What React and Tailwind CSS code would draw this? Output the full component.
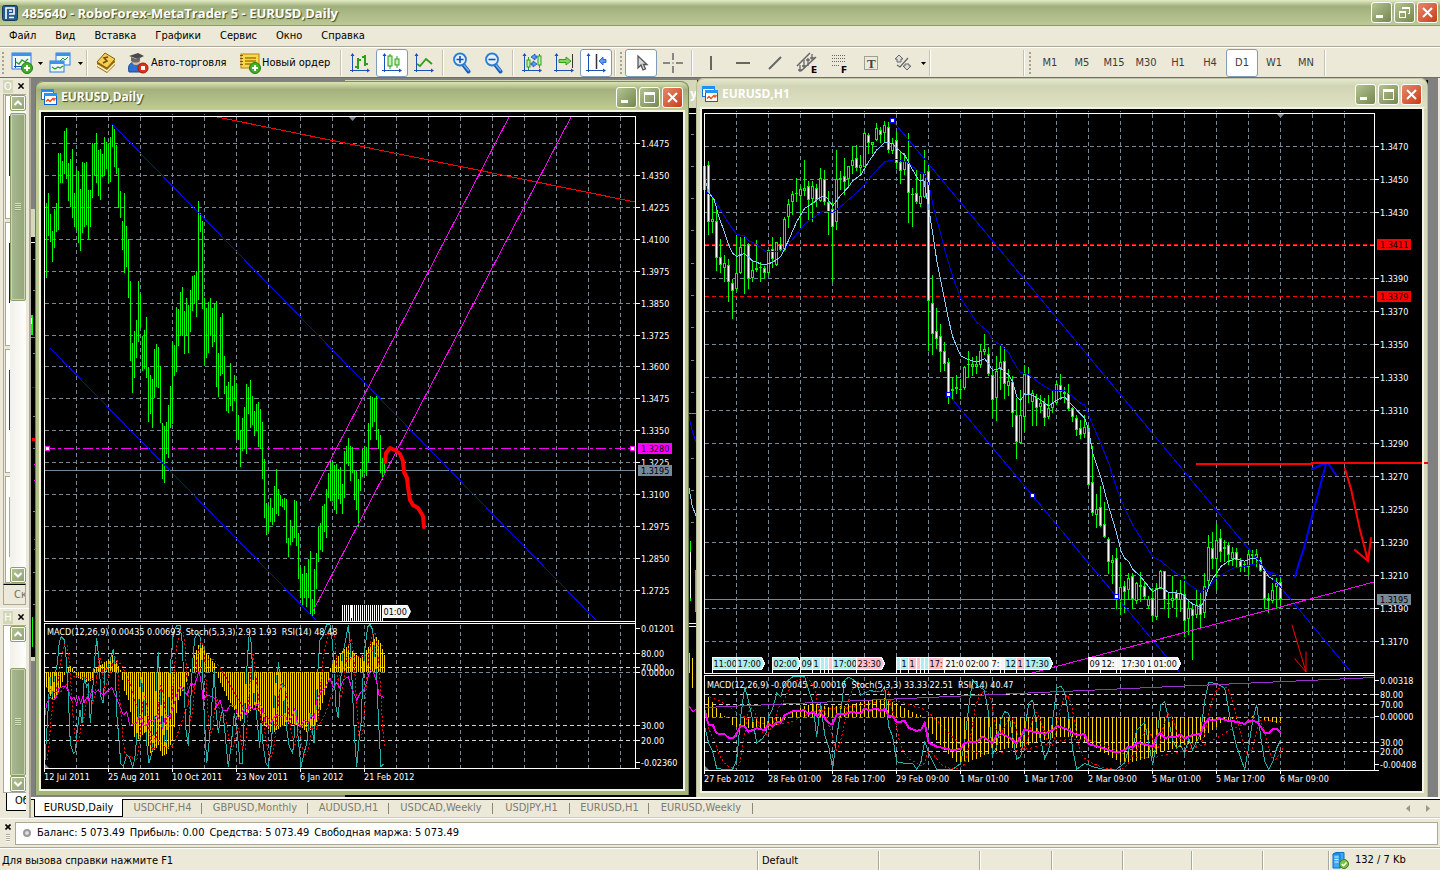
import React, { useState } from "react";

const GRID = "#778899";

const range = (from, to, step) => {
  const out = [];
  for (let v = from; v <= to; v += step) out.push(v);
  return out;
};

const menuItems = ["Файл", "Вид", "Вставка", "Графики", "Сервис", "Окно", "Справка"];
const timeframes = ["M1", "M5", "M15", "M30", "H1", "H4", "D1", "W1", "MN"];

const chartTabs = [
  { name: "EURUSD,Daily", width: "w-[89px]" },
  { name: "USDCHF,H4", width: "w-[79px]" },
  { name: "GBPUSD,Monthly", width: "w-[106px]" },
  { name: "AUDUSD,H1", width: "w-[81px]" },
  { name: "USDCAD,Weekly", width: "w-[104px]" },
  { name: "USDJPY,H1", width: "w-[77px]" },
  { name: "EURUSD,H1", width: "w-[79px]" },
  { name: "EURUSD,Weekly", width: "w-[104px]" },
];

// daily bars: high, low in thirds of a pixel from the top of the desktop
const dailyBars = [
  [381, 606], [351, 480], [414, 498], [465, 558], [399, 516], [381, 468], [231, 462], [231, 321], [255, 321], [165, 294],
  [156, 309], [261, 375], [249, 394], [219, 426], [351, 453], [279, 462], [285, 501], [339, 525], [258, 471], [261, 453],
  [258, 447], [342, 490], [342, 453], [202, 366], [202, 298], [171, 321], [222, 360], [219, 372], [234, 303], [183, 300],
  [198, 279], [204, 321], [183, 318], [147, 213], [159, 273], [207, 294], [276, 396], [345, 426], [435, 522], [351, 591],
  [450, 573], [490, 666], [615, 855], [801, 951], [765, 905], [732, 846], [615, 798], [654, 755], [780, 885], [762, 879],
  [723, 905], [873, 1038], [897, 1014], [909, 1056], [819, 966], [804, 933], [813, 936], [870, 1041], [1041, 1209], [1050, 1221],
  [1038, 1134], [987, 1146], [930, 1056], [798, 1044], [807, 900], [693, 888], [699, 810], [648, 780], [633, 780], [705, 834],
  [666, 780], [687, 831], [642, 768], [600, 705], [597, 684], [585, 723], [375, 672], [411, 468], [435, 699], [666, 867],
  [696, 846], [678, 831], [666, 780], [696, 813], [681, 798], [675, 933], [831, 963], [723, 900], [711, 894], [840, 954],
  [930, 1005], [918, 1011], [861, 990], [930, 1005], [897, 975], [924, 1089], [1017, 1092], [1062, 1173], [1026, 1125], [993, 1119],
  [924, 1134], [933, 1014], [912, 1056], [960, 1047], [1005, 1080], [984, 1065], [978, 1113], [999, 1119], [1038, 1209], [1149, 1326],
  [1281, 1377], [1290, 1368], [1266, 1338], [1296, 1347], [1230, 1338], [1179, 1314], [1239, 1320], [1257, 1290], [1269, 1293], [1266, 1302],
  [1269, 1401], [1386, 1443], [1332, 1407], [1353, 1398], [1272, 1386], [1275, 1410], [1371, 1509], [1473, 1566], [1494, 1590], [1470, 1566],
  [1491, 1593], [1449, 1566], [1425, 1617], [1569, 1620], [1479, 1614], [1431, 1539], [1353, 1458], [1341, 1422], [1290, 1428], [1284, 1368],
  [1239, 1386], [1191, 1266], [1152, 1275], [1155, 1274], [1167, 1302], [1164, 1314], [1179, 1269], [1173, 1284], [1224, 1314], [1125, 1266],
  [1110, 1164], [1086, 1170], [1110, 1215], [1113, 1191], [1182, 1272], [1185, 1302], [1209, 1352], [1179, 1245], [1119, 1203], [1110, 1191],
  [1113, 1200], [1041, 1158], [960, 1092], [963, 1053], [966, 1038], [960, 1092], [1059, 1119], [1077, 1191], [1146, 1212], [1152, 1191],
];

// hourly candles: high, low, body top, body bottom, 1 when the body is filled
const hourCandles = [
  [258, 330, 258, 330, 0], [243, 464, 255, 425, 1], [351, 459, 418, 428, 0], [388, 572, 424, 535, 1], [477, 578, 531, 556, 1],
  [525, 605, 549, 563, 0], [537, 666, 555, 605, 1], [597, 717, 609, 632, 1], [463, 634, 579, 626, 0], [471, 582, 502, 579, 0],
  [465, 641, 494, 497, 0], [489, 627, 493, 597, 1], [544, 605, 570, 594, 0], [481, 575, 565, 571, 0], [545, 605, 561, 564, 0],
  [558, 597, 563, 578, 1], [509, 585, 511, 581, 0], [471, 565, 507, 537, 1], [485, 558, 487, 556, 0], [471, 513, 493, 510, 1],
  [411, 512, 417, 510, 0], [357, 444, 373, 412, 0], [333, 405, 343, 367, 0], [294, 366, 339, 343, 0], [318, 445, 327, 349, 0],
  [240, 349, 324, 334, 0], [303, 420, 318, 360, 1], [304, 427, 319, 358, 0], [312, 381, 324, 361, 1], [264, 366, 295, 364, 0],
  [270, 375, 297, 366, 1], [333, 465, 366, 396, 1], [366, 605, 387, 442, 1], [210, 449, 297, 427, 0], [273, 331, 294, 297, 0],
  [234, 346, 289, 306, 1], [259, 324, 259, 298, 0], [198, 282, 241, 258, 0], [195, 273, 235, 265, 1], [225, 282, 255, 265, 0],
  [156, 262, 159, 260, 0], [159, 222, 166, 190, 1], [186, 222, 187, 195, 0], [129, 183, 145, 181, 0], [141, 189, 150, 166, 1],
  [124, 187, 136, 160, 0], [126, 219, 142, 210, 1], [174, 222, 189, 214, 0], [156, 267, 181, 250, 1], [216, 312, 246, 273, 1],
  [220, 285, 244, 271, 0], [159, 429, 249, 340, 1], [324, 442, 341, 344, 0], [270, 372, 340, 367, 1], [282, 381, 349, 373, 0],
  [210, 355, 283, 352, 0], [255, 814, 274, 664, 1], [585, 825, 669, 761, 1], [684, 808, 754, 778, 1], [732, 876, 769, 818, 1],
  [787, 873, 814, 853, 1], [834, 972, 846, 938, 1], [891, 960, 927, 932, 0], [885, 942, 921, 927, 0], [897, 957, 926, 929, 0],
  [859, 930, 861, 924, 0], [813, 893, 852, 856, 0], [831, 888, 853, 861, 0], [828, 882, 853, 861, 0], [792, 864, 814, 856, 0],
  [762, 826, 807, 816, 0], [801, 888, 822, 883, 1], [870, 1013, 886, 962, 1], [829, 1022, 873, 955, 0], [793, 930, 847, 865, 0],
  [801, 957, 844, 912, 1], [868, 948, 903, 917, 0], [888, 1040, 907, 1001, 1], [955, 1137, 1005, 1085, 1], [930, 1092, 1004, 1089, 0],
  [855, 1056, 883, 1011, 0], [862, 970, 885, 945, 1], [930, 1037, 940, 968, 0], [942, 1037, 955, 985, 1], [945, 1000, 970, 983, 0],
  [955, 1037, 970, 1015, 1], [945, 1018, 985, 1012, 0], [930, 1000, 970, 985, 0], [903, 975, 912, 970, 0], [882, 960, 915, 937, 1],
  [921, 970, 936, 941, 0], [912, 993, 940, 988, 1], [980, 1026, 984, 1012, 1], [1005, 1068, 1015, 1052, 1], [1020, 1077, 1045, 1067, 1],
  [1005, 1074, 1040, 1062, 0], [1035, 1216, 1044, 1214, 1], [1098, 1308, 1205, 1298, 1], [1242, 1344, 1288, 1305, 0], [1218, 1340, 1281, 1337, 1],
  [1266, 1374, 1333, 1372, 1], [1371, 1482, 1376, 1444, 1], [1425, 1513, 1440, 1449, 0], [1404, 1587, 1435, 1545, 1], [1449, 1605, 1520, 1560, 0],
  [1503, 1600, 1518, 1535, 1], [1480, 1560, 1495, 1530, 0], [1479, 1587, 1488, 1558, 1], [1506, 1573, 1510, 1565, 0], [1476, 1567, 1516, 1522, 0],
  [1506, 1561, 1518, 1550, 1], [1548, 1588, 1558, 1580, 0], [1525, 1625, 1555, 1610, 1], [1510, 1620, 1525, 1612, 0], [1470, 1528, 1472, 1526, 0],
  [1472, 1588, 1474, 1560, 1], [1535, 1615, 1568, 1572, 0], [1489, 1585, 1555, 1565, 0], [1530, 1610, 1540, 1558, 1], [1500, 1596, 1538, 1560, 0],
  [1485, 1672, 1543, 1625, 1], [1557, 1665, 1585, 1618, 0], [1572, 1740, 1588, 1610, 1], [1528, 1615, 1575, 1605, 0], [1540, 1645, 1573, 1605, 1],
  [1479, 1615, 1518, 1600, 0], [1365, 1520, 1400, 1502, 0], [1356, 1468, 1404, 1438, 1], [1332, 1531, 1380, 1436, 0], [1347, 1445, 1375, 1417, 1],
  [1380, 1445, 1400, 1405, 0], [1386, 1455, 1396, 1427, 1], [1400, 1458, 1417, 1438, 0], [1404, 1464, 1417, 1440, 1], [1435, 1475, 1442, 1460, 1],
  [1445, 1476, 1452, 1455, 0], [1406, 1487, 1422, 1460, 0], [1410, 1455, 1423, 1430, 0], [1408, 1460, 1422, 1435, 0], [1431, 1477, 1440, 1473, 1],
  [1465, 1587, 1472, 1557, 1], [1540, 1600, 1555, 1563, 1], [1510, 1570, 1530, 1562, 0], [1495, 1588, 1508, 1520, 0], [1495, 1587, 1505, 1557, 1],
];

const fastMa = [
  26, 298, 40, 340, 55, 360, 70, 415, 85, 455, 100, 500, 110, 520, 122, 530, 145, 520, 170, 543, 205, 555, 230, 547, 254, 530,
  278, 480, 302, 425, 326, 385, 350, 370, 378, 348, 394, 355, 410, 378, 434, 346, 458, 320, 470, 302, 494, 285, 518, 245,
  542, 210, 566, 187, 590, 190, 602, 205, 626, 225, 650, 270, 668, 300, 684, 303, 698, 385, 710, 460, 722, 540, 734, 600,
  746, 660, 758, 720, 770, 770, 782, 800, 794, 827, 815, 838, 842, 847, 866, 836, 880, 855, 890, 871, 914, 865, 938, 885,
  950, 905, 962, 950, 974, 961, 986, 942, 1010, 946, 1034, 960, 1058, 978, 1082, 960, 1106, 950, 1118, 965, 1142, 990,
  1166, 1015, 1178, 1050, 1190, 1120, 1214, 1190, 1238, 1280, 1262, 1360, 1274, 1410, 1286, 1435, 1298, 1445, 1310, 1468,
  1334, 1490, 1346, 1505, 1370, 1535, 1394, 1522, 1418, 1537, 1454, 1540, 1466, 1550, 1490, 1573, 1514, 1580, 1526, 1560,
  1538, 1520, 1550, 1495, 1562, 1480, 1574, 1460, 1592, 1447, 1616, 1436, 1646, 1444, 1670, 1434, 1682, 1438, 1694, 1448,
  1706, 1473, 1718, 1490, 1742, 1505, 1754, 1520,
];

const slowMa = [
  26, 333, 50, 350, 74, 390, 98, 430, 122, 463, 146, 468, 158, 482, 180, 492, 206, 513, 254, 515, 266, 505, 290, 477, 326, 432,
  350, 415, 378, 394, 410, 397, 434, 380, 494, 327, 530, 283, 566, 245, 600, 238, 635, 247, 668, 275, 684, 280, 698, 310,
  710, 370, 722, 420, 734, 460, 746, 510, 758, 550, 770, 590, 794, 655, 842, 727, 878, 757, 890, 780, 914, 795, 938, 818,
  962, 862, 974, 877, 1000, 885, 1034, 912, 1070, 933, 1106, 932, 1118, 940, 1154, 970, 1166, 975, 1178, 1005, 1190, 1035,
  1214, 1090, 1238, 1150, 1262, 1225, 1286, 1285, 1310, 1335, 1342, 1385, 1370, 1430, 1394, 1443, 1430, 1473, 1454, 1487,
  1478, 1513, 1514, 1537, 1538, 1520, 1562, 1495, 1592, 1475, 1616, 1463, 1646, 1460, 1670, 1453, 1692, 1450, 1706, 1470,
  1732, 1480, 1754, 1490,
];

const dailyMacd = [
  139, 262, 157, 300, 169, 290, 190, 240, 196, 210, 211, 197, 223, 212, 235, 235, 260, 245, 277, 240, 283, 208, 310, 190,
  340, 162, 352, 190, 364, 217, 370, 265, 385, 300, 403, 410, 415, 418, 433, 400, 451, 458, 460, 455, 475, 435, 487, 468,
  499, 462, 517, 420, 535, 300, 560, 245, 571, 207, 583, 165, 601, 122, 613, 150, 643, 190, 649, 220, 655, 235, 685, 300,
  721, 362, 745, 340, 766, 312, 790, 370, 817, 402, 841, 380, 871, 370, 895, 375, 919, 395, 943, 385, 961, 330, 985, 240,
  991, 205, 1003, 180, 1030, 150, 1045, 135, 1063, 160, 1081, 175, 1105, 140, 1129, 110, 1141, 130, 1153, 165,
];

const dailyStoch = [
  135, 480, 142, 370, 150, 230, 157, 290, 163, 240, 172, 190, 178, 125, 184, 110, 193, 120, 199, 180, 205, 290, 211, 430,
  220, 460, 226, 455, 232, 390, 240, 330, 246, 370, 253, 230, 260, 260, 265, 250, 271, 370, 277, 290, 283, 190, 290, 115,
  297, 180, 303, 290, 309, 310, 315, 220, 325, 200, 340, 148, 346, 200, 350, 340, 358, 430, 362, 490, 370, 500, 380, 465,
  388, 470, 398, 500, 404, 480, 412, 390, 418, 280, 424, 230, 432, 300, 440, 430, 447, 490, 455, 460, 463, 400, 469, 250,
  475, 155, 481, 290, 490, 390, 497, 440, 505, 340, 511, 200, 520, 100, 530, 75, 540, 75, 547, 130, 552, 260, 558, 390,
  565, 438, 571, 330, 577, 200, 584, 115, 592, 100, 600, 110, 607, 190, 612, 330, 620, 490, 627, 430, 635, 320, 643, 210,
  648, 330, 655, 400, 662, 350, 668, 330, 675, 400, 685, 500, 693, 440, 703, 340, 712, 400, 720, 490, 727, 490, 733, 350,
  742, 180, 748, 100, 754, 130, 760, 260, 768, 330, 775, 400, 779, 445, 783, 370, 790, 440, 798, 490, 805, 500, 813, 440,
  820, 350, 828, 250, 836, 185, 840, 270, 848, 250, 855, 340, 862, 400, 868, 440, 878, 460, 884, 390, 888, 330, 895, 420,
  903, 500, 912, 460, 920, 430, 930, 340, 935, 370, 942, 430, 948, 330, 955, 190, 960, 120, 970, 105, 980, 73, 990, 75,
  998, 130, 1002, 220, 1008, 320, 1015, 355, 1021, 260, 1027, 170, 1035, 130, 1045, 75, 1052, 150, 1057, 260, 1063, 400,
  1070, 500, 1077, 420, 1083, 370, 1088, 250, 1094, 150, 1103, 80, 1110, 73, 1118, 90, 1125, 170, 1130, 230, 1135, 350,
  1143, 500, 1150, 492,
];

const dailyRsi = [
  135, 345, 140, 310, 150, 292, 160, 300, 170, 290, 176, 265, 195, 258, 205, 270, 214, 300, 222, 290, 230, 312, 236, 290,
  242, 310, 248, 290, 254, 305, 262, 290, 268, 305, 275, 270, 285, 280, 295, 270, 310, 285, 335, 262, 345, 285, 352, 300,
  362, 325, 370, 345, 380, 335, 390, 378, 400, 370, 410, 370, 418, 350, 430, 375, 440, 375, 450, 360, 460, 365, 472, 345,
  488, 385, 497, 345, 510, 350, 520, 320, 530, 285, 540, 260, 550, 270, 562, 285, 572, 250, 585, 255, 597, 212, 604, 250,
  610, 305, 620, 285, 635, 290, 645, 295, 650, 320, 660, 300, 668, 330, 680, 333, 690, 315, 705, 315, 715, 355, 730, 330,
  738, 345, 748, 315, 762, 330, 772, 310, 785, 320, 795, 365, 805, 380, 820, 355, 830, 345, 840, 350, 855, 345, 865, 368,
  878, 345, 884, 325, 890, 360, 900, 380, 915, 360, 925, 370, 935, 345, 943, 355, 950, 300, 960, 280, 975, 265, 990, 235,
  1000, 262, 1010, 248, 1020, 265, 1030, 240, 1045, 230, 1055, 265, 1070, 300, 1083, 275, 1090, 275, 1100, 245, 1110, 212,
  1120, 215, 1130, 245, 1137, 285, 1152, 292,
];

const hourMacd = [
  38, 890, 50, 905, 62, 925, 74, 940, 86, 947, 98, 955, 110, 975, 122, 982, 200, 985, 230, 978, 254, 970, 266, 960, 278, 955,
  290, 937, 320, 920, 360, 910, 400, 920, 446, 917, 494, 905, 542, 897, 566, 895, 602, 910, 638, 930, 662, 942, 686, 950,
  698, 983, 722, 1020, 746, 1050, 782, 1087, 818, 1085, 854, 1072, 890, 1055, 938, 1045, 986, 1040, 1022, 1025, 1082, 1010,
  1130, 1010, 1178, 1030, 1226, 1060, 1274, 1085, 1310, 1085, 1358, 1075, 1394, 1055, 1442, 1045, 1482, 1030, 1514, 1020,
  1538, 1000, 1562, 980, 1574, 970, 1586, 960, 1622, 957, 1670, 948, 1694, 955, 1706, 960, 1730, 967, 1754, 970,
];

const hourStoch = [
  26, 980, 38, 1030, 50, 1055, 62, 1105, 80, 1108, 110, 1108, 122, 1080, 134, 950, 146, 860, 158, 905, 170, 960, 182, 1030,
  200, 1015, 210, 1000, 218, 950, 230, 925, 242, 880, 254, 890, 266, 850, 290, 830, 326, 830, 338, 870, 350, 905, 362, 1010,
  374, 910, 386, 1005, 398, 1040, 410, 1105, 422, 1010, 434, 935, 446, 840, 458, 832, 470, 838, 482, 850, 494, 885, 520, 872,
  556, 875, 566, 860, 578, 980, 590, 1010, 602, 1085, 626, 1090, 650, 1090, 662, 1108, 674, 1090, 686, 1022, 700, 1065,
  722, 1108, 770, 1108, 794, 1090, 806, 1025, 818, 920, 830, 840, 842, 855, 865, 870, 878, 940, 890, 1065, 902, 1040,
  914, 960, 926, 935, 938, 940, 950, 1010, 962, 1077, 974, 1070, 986, 990, 998, 910, 1010, 900, 1022, 980, 1034, 1020,
  1046, 1075, 1058, 1050, 1070, 960, 1082, 865, 1094, 858, 1106, 875, 1118, 950, 1130, 1050, 1142, 1108, 1166, 1090,
  1190, 1100, 1222, 1108, 1262, 1108, 1286, 1088, 1298, 1045, 1310, 1050, 1322, 990, 1346, 968, 1358, 1030, 1370, 1095,
  1382, 1020, 1394, 915, 1406, 905, 1418, 960, 1430, 1020, 1442, 1045, 1454, 1035, 1466, 1060, 1478, 1015, 1490, 1050,
  1514, 1000, 1526, 900, 1538, 848, 1562, 850, 1586, 865, 1598, 930, 1610, 990, 1622, 1040, 1646, 1108, 1658, 1040,
  1670, 960, 1682, 915, 1694, 1010, 1706, 1085, 1718, 1108, 1730, 1085, 1742, 1045, 1754, 1020,
];

const hourRsi = [
  26, 932, 38, 975, 50, 975, 62, 1000, 86, 1003, 98, 1014, 112, 1014, 122, 1000, 134, 978, 146, 980, 158, 995, 182, 985,
  206, 990, 218, 972, 230, 980, 242, 965, 254, 968, 266, 945, 290, 934, 326, 931, 338, 942, 350, 935, 362, 948, 374, 938,
  386, 955, 400, 970, 410, 972, 422, 943, 446, 943, 464, 936, 494, 940, 506, 925, 518, 931, 542, 925, 554, 932, 566, 927,
  578, 947, 590, 948, 602, 967, 626, 963, 638, 983, 662, 993, 676, 988, 686, 968, 698, 1028, 722, 1040, 770, 1050, 794, 1047,
  806, 1028, 842, 1025, 860, 1010, 890, 1030, 902, 1005, 914, 1000, 938, 1012, 962, 1030, 974, 1010, 986, 988, 1010, 995,
  1046, 1001, 1070, 990, 1082, 978, 1106, 985, 1142, 1005, 1166, 1003, 1178, 1033, 1202, 1038, 1238, 1050, 1262, 1058,
  1286, 1050, 1298, 1040, 1310, 1043, 1324, 1028, 1346, 1033, 1370, 1040, 1382, 1010, 1392, 1000, 1407, 1013, 1442, 1010,
  1454, 1003, 1466, 1015, 1490, 1005, 1514, 1002, 1526, 970, 1538, 957, 1550, 962, 1574, 955, 1598, 963, 1622, 965,
  1646, 972, 1658, 962, 1682, 965, 1694, 980, 1706, 998, 1718, 1000, 1730, 988, 1742, 987, 1754, 997,
];

const CYAN = "#afeeee";
const PINK = "#ffc0cb";
const PALE = "#f5f5f5";

const newsFlags = [
  [712, 24, "11:00", CYAN], [736, 25, "17:00", CYAN, true], [772, 25, "02:00", CYAN, true], [800, 12, "09", CYAN],
  [812, 8, "1", CYAN], [820, 4, "", CYAN], [824, 4, "", CYAN], [828, 4, "", PINK], [832, 24, "17:00", CYAN],
  [856, 25, "23:30", PINK, true], [896, 4, "", CYAN], [900, 8, "1", CYAN], [908, 8, "1", PINK], [916, 4, "", PINK],
  [920, 4, "", CYAN], [924, 4, "", CYAN], [928, 15, "17:", PINK], [944, 20, "21:0", PALE], [990, 10, "7:", PALE],
  [964, 25, "02:00", PALE, true], [1000, 4, "", PALE], [1004, 12, "12", CYAN], [1016, 8, "1", PINK],
  [1024, 25, "17:30", CYAN, true], [1088, 12, "09", PALE], [1100, 16, "12:", PALE], [1116, 4, "", PALE],
  [1145, 6, "1", PALE], [1120, 25, "17:30", PALE, true], [1152, 25, "01:00", PALE, true],
];

// flat x,y list -> svg points, list is kept in thirds of a pixel
const toPoints = (list, dx, dy) => {
  const out = [];
  for (let i = 0; i < list.length; i += 2) {
    out.push(`${(list[i] / 3 + dx).toFixed(1)},${(list[i + 1] / 3 + dy).toFixed(1)}`);
  }
  return out.join(" ");
};

const valueAt = (list, x) => {
  for (let i = 2; i < list.length; i += 2) {
    if (list[i] >= x) {
      const t = (x - list[i - 2]) / (list[i] - list[i - 2]);
      return list[i - 1] + (list[i + 1] - list[i - 1]) * Math.max(t, 0);
    }
  }
  return list[list.length - 1];
};

const smooth = (list, step, period) => {
  const out = [];
  let prev = list[1];
  for (let x = list[0]; x <= list[list.length - 2]; x += step) {
    prev += (valueAt(list, x) - prev) * (2 / (period + 1));
    out.push(x, prev);
  }
  return out;
};

function Grid({ xs, ys, left, right, top, split, bottom }) {
  return (
    <g stroke={GRID} strokeDasharray="4 3" shapeRendering="crispEdges">
      {xs.map((x) => (
        <React.Fragment key={x}>
          <line x1={x} y1={top} x2={x} y2={split} />
          <line x1={x} y1={split + 3} x2={x} y2={bottom} />
        </React.Fragment>
      ))}
      {ys.map((y) => (
        <line key={y} x1={left} y1={y} x2={right} y2={y} />
      ))}
    </g>
  );
}

function Frame({ left, right, top, split, bottom }) {
  return (
    <g stroke="#fff" fill="none" shapeRendering="crispEdges">
      <path d={`M${left} ${split}V${top}H${right}V${bottom}`} />
      <path d={`M${left} ${split}H${right}M${left} ${bottom}V${split + 2}H${right}M${left} ${bottom}H${right + 4}`} />
    </g>
  );
}

function Levels({ ys, left, right }) {
  return (
    <g stroke="#d3d3d3" strokeDasharray="4 3" shapeRendering="crispEdges">
      {ys.map((y) => (
        <line key={y} x1={left} y1={y} x2={right} y2={y} />
      ))}
    </g>
  );
}

function PriceScale({ x, labels }) {
  return (
    <g fill="#fff">
      {labels.map(([text, y]) => (
        <React.Fragment key={text}>
          <rect x={x} y={y - 1} width="4" height="1" />
          <text x={x + 5} y={y + 3}>{text}</text>
        </React.Fragment>
      ))}
    </g>
  );
}

function PriceTag({ x, y, color, children }) {
  return (
    <g>
      <rect x={x} y={y - 6} width="34" height="11" fill={color} />
      <text x={x + 3} y={y + 3} fill="#000">{children}</text>
    </g>
  );
}

function TimeScale({ y, labels }) {
  return (
    <g fill="#fff">
      {labels.map(([text, x]) => (
        <React.Fragment key={text}>
          <rect x={x} y={y} width="1" height="4" />
          <text x={x} y={y + 12}>{text}</text>
        </React.Fragment>
      ))}
    </g>
  );
}

function Flag({ x, y, width, text, color, tip }) {
  return (
    <g>
      <path
        d={tip ? `M${x} ${y}h${width}l3 6l-3 6h-${width}z` : `M${x} ${y}h${width}v12h-${width}z`}
        fill={color}
        stroke="#fff"
      />
      <path d={`M${x} ${y}v16`} stroke="#fff" />
      <text x={x + 1} y={y + 9} fill="#000">{text}</text>
    </g>
  );
}

function Handle({ x, y, color }) {
  return <rect x={x - 2} y={y - 2} width="4" height="4" fill="#fff" stroke={color} />;
}

function DailyChart() {
  const area = { left: 44.5, right: 635.5, top: 116.5, split: 621.5, bottom: 768.5 };
  const ys = range(143.5, 335.5, 32).concat(range(366.5, 590.5, 32));
  return (
    <svg
      className="block shrink-0 font-['DejaVu_Sans_Condensed','DejaVu_Sans',sans-serif] text-[9px]"
      width="642"
      height="677"
      viewBox="41 112 642 677"
      role="img"
      aria-label="EURUSD,Daily"
    >
      <rect x="41" y="112" width="642" height="677" fill="#000" />
      <Grid xs={range(76.5, 620.5, 32)} ys={ys} {...area} />
      <g fill={GRID}>
        {range(76, 620, 32).map((x) => (
          <rect key={x} x={x} y="114" width="1" height="1" />
        ))}
        <path d="M348 116h9l-4.500 5z" />
      </g>
      <path d="M45 470.500H635" stroke={GRID} shapeRendering="crispEdges" />
      <path d="M45 448.500H635" stroke="#f0f" strokeDasharray="10 3 3 3" shapeRendering="crispEdges" />

      <g fill="#0f0" shapeRendering="crispEdges">
        {dailyBars.map(([high, low], i) => (
          <rect key={i} x={46 + i * 2} y={76 + high / 3} width="1" height={(low - high) / 3} />
        ))}
      </g>
      <g fill="none" shapeRendering="crispEdges">
        <path d="M112 124L596 620M50 348L316 620" stroke="#00f" />
        <path d="M217 117L635 202" stroke="red" />
        <path d="M309 501L509 117M313 611L571 117" stroke="#f0f" />
      </g>
      <Handle x={47.5} y={448.5} color="#f0f" />
      <Handle x={632.5} y={448.5} color="#f0f" />
      <path
        d="M385 462L386 453L390 448L395 450L400 454L403 461L404 472L407 478L408 487L410 500L413 505L418 508L423 516L424 527"
        fill="none"
        stroke="red"
        strokeWidth="4"
        strokeLinecap="round"
        strokeLinejoin="round"
      />
      <g shapeRendering="crispEdges" fill="#fff">
        {range(342, 380, 2).map((x) => (
          <rect key={x} x={x} y="605" width="1" height="16" />
        ))}
        <rect x="351" y="605" width="2" height="13" />
      </g>
      <Flag x={382.5} y={605.5} width={25} text="01:00" color={PALE} tip />

      <Levels ys={[653.5, 667.5, 725.5, 740.5]} left={45} right={635} />
      <path d="M45 672.500H635" stroke={GRID} strokeDasharray="4 3" shapeRendering="crispEdges" />
      <g fill="gold" shapeRendering="crispEdges">
        {range(0, 169, 1).map((i) => {
          const v = valueAt(dailyMacd, 139 + i * 6);
          return <rect key={i} x={46 + i * 2} y={600 + Math.min(v, 217) / 3} width="1" height={Math.abs(v - 217) / 3} />;
        })}
      </g>
      <g fill="none" shapeRendering="crispEdges">
        <polyline points={toPoints(smooth(dailyMacd, 6, 11), 0, 600)} stroke="red" strokeDasharray="2 2" />
        <polyline points={toPoints(dailyStoch, 0, 600)} stroke="#20b2aa" />
        <polyline points={toPoints(smooth(dailyStoch, 6, 3), 2, 600)} stroke="red" strokeDasharray="2 2" />
        <polyline points={toPoints(dailyRsi, 0, 600)} stroke="#f0f" />
      </g>
      <text x="47" y="635" fill="#fff" className="whitespace-pre">
        {"MACD(12,26,9) 0.00435 0.00693  Stoch(5,3,3) 2.93 1.93  RSI(14) 48.48"}
      </text>

      <Frame {...area} />
      <PriceScale
        x={636}
        labels={[
          ["1.4475", 144], ["1.4350", 176], ["1.4225", 208], ["1.4100", 240], ["1.3975", 272], ["1.3850", 304],
          ["1.3725", 336], ["1.3600", 367], ["1.3475", 399], ["1.3350", 431], ["1.3225", 463], ["1.3100", 495],
          ["1.2975", 527], ["1.2850", 559], ["1.2725", 591], ["0.01201", 629], ["80.00", 654], ["70.00", 668],
          ["0.00000", 673], ["30.00", 726], ["20.00", 741], ["-0.02360", 763],
        ]}
      />
      <PriceTag x={638} y={449} color="#f0f">1.3280</PriceTag>
      <PriceTag x={638} y={471} color={GRID}>1.3195</PriceTag>
      <path d="M45 764l4 4h-4z" fill={GRID} />
      <TimeScale
        y={768}
        labels={[["12 Jul 2011", 44], ["25 Aug 2011", 108], ["10 Oct 2011", 172], ["23 Nov 2011", 236], ["6 Jan 2012", 300], ["21 Feb 2012", 364]]}
      />
    </svg>
  );
}

function HourChart() {
  const area = { left: 704.5, right: 1374.5, top: 113.5, split: 673.5, bottom: 770.5 };
  return (
    <svg
      className="block shrink-0 overflow-visible font-['DejaVu_Sans_Condensed','DejaVu_Sans',sans-serif] text-[9px]"
      width="720"
      height="682"
      viewBox="702 109 720 682"
      role="img"
      aria-label="EURUSD,H1"
    >
      <rect x="702" y="109" width="720" height="682" fill="#000" />
      <Grid xs={range(736.5, 1344.5, 32)} ys={range(146.5, 641.5, 33)} {...area} />
      <g fill={GRID}>
        {range(736, 1344, 32).map((x) => (
          <rect key={x} x={x} y="111" width="1" height="1" />
        ))}
        <path d="M1276 113h9l-4.500 5z" />
      </g>
      <g stroke="red" strokeDasharray="4 3" shapeRendering="crispEdges">
        <path d="M705 244.500H1374M705 296.500H1374" />
      </g>
      <path d="M705 599.500H1374" stroke={GRID} shapeRendering="crispEdges" />

      <g shapeRendering="crispEdges">
        {hourCandles.map(([high, low, top, bottom, filled], i) => {
          const x = 704 + i * 4;
          const y = Math.round(80 + top / 3);
          const h = Math.max(Math.round((bottom - top) / 3), 1);
          return (
            <g key={i}>
              <rect x={x} y={80 + high / 3} width="1" height={(low - high) / 3} fill="#0f0" />
              <rect x={x - 1} y={y} width="3" height={h} fill="#0f0" />
              {h > 2 && <rect x={x} y={y + 1} width="1" height={h - 2} fill={filled ? "#fff" : "#000"} />}
            </g>
          );
        })}
      </g>
      <g fill="none" shapeRendering="crispEdges">
        <polyline points={toPoints(slowMa, 696, 80)} stroke="#00d" />
        <polyline points={toPoints(fastMa, 696, 80)} stroke="#87cefa" />
        <path d="M892 120L1351 672M948 394L1180 673" stroke="#00f" />
        <path d="M1032 673L1374 582" stroke="#f0f" />
      </g>
      <Handle x={892.5} y={120.5} color="#00f" />
      <Handle x={948.5} y={394.5} color="#00f" />
      <Handle x={1032.5} y={495.5} color="#00f" />
      <Handle x={1116.5} y={596.5} color="#00f" />

      <g fill="none" strokeLinecap="round">
        <path d="M1295 577L1299 563L1304 548L1315 505L1326 464M1312 469L1326 463M1328 463L1336 475" stroke="#00f" strokeWidth="2" />
        <path d="M1345 469L1351 489L1360 530L1368 561M1355 550L1368 561L1371 538" stroke="red" strokeWidth="2" />
        <path d="M1292 625L1298 645L1306 672M1295 659L1306 672V652" stroke="red" />
        <path d="M1196 464H1312V463H1428" stroke="red" strokeWidth="2" strokeLinecap="butt" />
      </g>

      <g shapeRendering="crispEdges">
        {newsFlags.map(([x, width, text, color, tip]) => (
          <Flag key={x} x={x + 0.5} y={657.5} width={width} text={text} color={color} tip={tip} />
        ))}
      </g>

      <Levels ys={[694.5, 704.5, 742.5, 751.5]} left={705} right={1374} />
      <path d="M705 717.500H1374" stroke={GRID} strokeDasharray="4 3" shapeRendering="crispEdges" />
      <g fill="gold" shapeRendering="crispEdges">
        {range(1, 144, 1).map((i) => {
          const v = valueAt(hourMacd, 26 + i * 12);
          return <rect key={i} x={704 + i * 4} y={400 + Math.min(v, 952) / 3} width="1" height={Math.abs(v - 952) / 3} />;
        })}
      </g>
      <g fill="none" shapeRendering="crispEdges">
        <polyline points={toPoints(smooth(hourMacd, 12, 11), 696, 400)} stroke="red" strokeDasharray="2 3" />
        <polyline points={toPoints(hourStoch, 696, 400)} stroke="#20b2aa" />
        <polyline points={toPoints(smooth(hourStoch, 12, 3), 699, 400)} stroke="red" strokeDasharray="2 2" />
        <polyline points={toPoints(hourRsi, 696, 400)} stroke="#f0f" strokeWidth="2" />
        <path d="M705 707.500L1374 677.500" stroke="#9932cc" />
      </g>
      <text x="707" y="688" fill="#fff" className="whitespace-pre">
        {"MACD(12,26,9) -0.00045 -0.00016  Stoch(5,3,3) 33.33 22.51  RSI(14) 40.47"}
      </text>

      <Frame {...area} />
      <PriceScale
        x={1375}
        labels={[
          ["1.3470", 147], ["1.3450", 180], ["1.3430", 213], ["1.3390", 279], ["1.3370", 312], ["1.3350", 345],
          ["1.3330", 378], ["1.3310", 411], ["1.3290", 444], ["1.3270", 477], ["1.3250", 510], ["1.3230", 543],
          ["1.3210", 576], ["1.3190", 609], ["1.3170", 642], ["0.00318", 681], ["80.00", 695], ["70.00", 705],
          ["0.00000", 717], ["30.00", 743], ["20.00", 752], ["-0.00408", 765],
        ]}
      />
      <PriceTag x={1377} y={245} color="red">1.3411</PriceTag>
      <PriceTag x={1377} y={297} color="red">1.3379</PriceTag>
      <PriceTag x={1377} y={600} color={GRID}>1.3195</PriceTag>
      <path d="M705 766l4 4h-4z" fill={GRID} />
      <TimeScale
        y={770}
        labels={[
          ["27 Feb 2012", 704], ["28 Feb 01:00", 768], ["28 Feb 17:00", 832], ["29 Feb 09:00", 896], ["1 Mar 01:00", 960],
          ["1 Mar 17:00", 1024], ["2 Mar 09:00", 1088], ["5 Mar 01:00", 1152], ["5 Mar 17:00", 1216], ["6 Mar 09:00", 1280],
        ]}
      />
    </svg>
  );
}

/* ---------- window chrome ---------- */

const captionTones = {
  active: "bg-linear-to-br from-[#b5c493] to-[#75874f]",
  inactive: "bg-linear-to-br from-[#cfdab4] to-[#b4c08f]",
  close: "bg-linear-to-br from-[#e8866a] to-[#c63c12]",
  closeInactive: "bg-linear-to-br from-[#cba5a0] to-[#b88683]",
};

function CaptionButton({ label, tone, children }) {
  return (
    <button
      aria-label={label}
      className={`flex h-[21px] w-[21px] items-center justify-center rounded-[3px] border border-white ${captionTones[tone]}`}
    >
      <svg width="17" height="17" viewBox="0 0 17 17" fill="none" stroke="#fff" shapeRendering="crispEdges">
        {children}
      </svg>
    </button>
  );
}

function CaptionButtons({ active = true, restore = false }) {
  const tone = active ? "active" : "inactive";
  return (
    <div className="flex gap-[2px]">
      <CaptionButton label="Свернуть" tone={tone}>
        <path d="M3 12.500h7" strokeWidth="3" />
      </CaptionButton>
      <CaptionButton label={restore ? "Восстановить" : "Развернуть"} tone={tone}>
        {restore ? (
          <path d="M6.500 5V3.500h7v6H12M6 4h8M3.500 7.500h6v6h-6zM3 8h7" />
        ) : (
          <path d="M3.500 3.500h10v10h-10zM3 4.500h11M3 5.500h11" />
        )}
      </CaptionButton>
      <CaptionButton label="Закрыть" tone={active ? "close" : "closeInactive"}>
        <path d="M4 4l9 9M13 4l-9 9" strokeWidth="2" shapeRendering="auto" />
      </CaptionButton>
    </div>
  );
}

function ChartIcon() {
  return (
    <svg width="17" height="16" viewBox="0 0 17 16" aria-hidden="true">
      <rect x="0.500" y="0.500" width="12" height="10" fill="#fff" stroke="#0a78e8" />
      <rect x="0" y="0" width="13" height="3" fill="#1e8ff5" />
      <rect x="3.500" y="4.500" width="12" height="11" fill="#fff" stroke="#0a62d0" />
      <rect x="3" y="4" width="13" height="3" fill="#2196f3" />
      <path d="M5 12.500l2-2 2 2 3-3 1 1.500 1.500-2" fill="none" stroke="#f4511e" strokeWidth="1.500" />
    </svg>
  );
}

function ChartWindow({ title, active, place, children }) {
  return (
    <section
      aria-label={title}
      className={`absolute flex flex-col rounded-t-[8px] border-x px-[5px] pb-[6px] ${place} ${
        active
          ? "border-[#6f7f50] bg-linear-to-b from-[#c5d09c] via-[#b4c28a] to-[#a5b47c]"
          : "border-[#b6bb98] bg-[#d5d9ba]"
      }`}
    >
      <header
        className={`-mx-[5px] flex h-[31px] items-center rounded-t-[8px] border-t pr-[5px] pl-[5px] ${
          active
            ? "border-[#7d8d5c] bg-linear-to-b from-[#dbe5b4] via-[#a4b17c] via-25% to-[#c3ce97]"
            : "border-[#c2c6a6] bg-linear-to-b from-[#e4e8cc] via-[#d1d5b5] via-25% to-[#dfe2c4]"
        }`}
      >
        <ChartIcon />
        <h2
          className={`ml-[3px] flex-1 truncate font-['Open_Sans',sans-serif] text-[12px] font-bold text-white ${
            active ? "[text-shadow:1px_1px_1px_#3c4a1e]" : ""
          }`}
        >
          {title}
        </h2>
        <CaptionButtons active={active} />
      </header>
      <div className="flex flex-1 bg-black outline-2 outline-[#f3f4e4]">{children}</div>
    </section>
  );
}

/* ---------- toolbar ---------- */

function ToolButton({ label, pressed, size = "w-8", children }) {
  return (
    <button
      aria-label={label}
      aria-pressed={pressed}
      className={`flex h-7 items-center justify-center ${size} ${
        pressed ? "rounded-[3px] border border-[#7f9db9] bg-white" : ""
      }`}
    >
      {children}
    </button>
  );
}

function Icon({ children, size = 22 }) {
  return (
    <svg width={size} height={size} viewBox="0 0 22 22" fill="none" aria-hidden="true">
      {children}
    </svg>
  );
}

function Caret({ label }) {
  return (
    <button aria-label={label} className="flex h-7 w-2 items-center justify-center">
      <svg width="5" height="3" viewBox="0 0 5 3">
        <path d="M0 0h5L2.500 3z" fill="#000" />
      </svg>
    </button>
  );
}

function Separator() {
  return <span className="mx-[2px] h-[26px] w-[2px] border-r border-white bg-[#c5c2b2]" />;
}

function Grip() {
  return <span className="mx-[2px] h-[22px] w-[3px] border-l-2 border-dotted border-[#a5a294]" />;
}

const Axes = () => (
  <>
    <path d="M3.500 3v17M1 18.500h18" stroke="#1b50b8" />
    <path d="M3.500 1l2 3h-4zM21 18.500l-3-2v4z" fill="#1b50b8" />
  </>
);

const PlusBadge = () => (
  <>
    <circle cx="16" cy="16" r="5.500" fill="#43b02a" stroke="#1f7d12" />
    <path d="M16 13v6M13 16h6" stroke="#fff" strokeWidth="2" />
  </>
);

const BlueArrow = ({ d }) => <path d={d} fill="#5b9bf0" stroke="#1b50b8" strokeWidth="0.800" />;

function Magnifier({ plus }) {
  return (
    <Icon>
      <path d="M12.500 13l5 6.500" stroke="#1a5fb4" strokeWidth="4" strokeLinecap="round" />
      <path d="M13 13l4.500 5.500" stroke="#6fb1f5" strokeWidth="1.500" strokeLinecap="round" />
      <circle cx="9" cy="7.500" r="6" fill="#e3f2ff" stroke="#2a7bd6" strokeWidth="1.800" />
      <path d={plus ? "M5.500 7.500h7M9 4v7" : "M5.500 7.500h7"} stroke="#1550a8" strokeWidth="1.600" />
    </Icon>
  );
}

function Toolbar() {
  const [period, setPeriod] = useState("D1");
  return (
    <div role="toolbar" className="flex h-8 items-center overflow-hidden border-t border-b border-t-[#aca899] border-b-[#716f64] bg-[#ece9d8] pt-[2px] shadow-[inset_0_1px_0_#fff]">
      <Grip />
      <ToolButton label="Новый график" size="w-[29px]">
        <Icon>
          <rect x="1" y="1" width="19" height="16" fill="#eef7ff" stroke="#2a7de0" />
          <rect x="1" y="1" width="19" height="3" fill="#3b93ee" />
          <path d="M4.500 6v10M3 14.500h15" stroke="#1b50b8" />
          <path d="M5 10l3 2 3-4 3 2 3-3" stroke="#2f9e1b" strokeWidth="1.300" />
          <PlusBadge />
        </Icon>
      </ToolButton>
      <Caret label="Список графиков" />
      <ToolButton label="Профили">
        <Icon>
          <rect x="7" y="1" width="14" height="12" fill="#eef7ff" stroke="#2a7de0" />
          <rect x="7" y="1" width="14" height="3" fill="#3b93ee" />
          <path d="M11 9l3-3 2 2 3-3" stroke="#2f9e1b" />
          <rect x="1" y="9" width="14" height="11" fill="#eef7ff" stroke="#2a7de0" />
          <rect x="1" y="9" width="14" height="3" fill="#3b93ee" />
          <path d="M3 15l3 2 3-2 2 1 3-2" stroke="#2f9e1b" strokeWidth="1.300" />
        </Icon>
      </ToolButton>
      <Caret label="Список профилей" />
      <Separator />
      <ToolButton label="MetaEditor">
        <Icon>
          <path d="M2 10l9-8 9 7v4l-8 8-10-6z" fill="#9a6a0c" />
          <path d="M2 10l8-9 10 6-8 9z" fill="#f3cf57" stroke="#8a5c06" />
          <path d="M2 13l10 6 8-8" stroke="#fff3c4" strokeWidth="1.500" />
          <path d="M13 5l-4 1 3 3-4 2" stroke="#7a4d00" strokeWidth="1.500" />
        </Icon>
      </ToolButton>
      <button className="flex h-7 w-[112px] items-center gap-[2px] pl-[5px] whitespace-nowrap">
        <Icon>
          <path d="M2 20c-2-7 2-10 6-10s7 3 6 10z" fill="#2f6fd0" stroke="#194a99" />
          <circle cx="9" cy="9" r="4" fill="#e6b98a" />
          <path d="M2 4l9-3 6 3-6 3z" fill="#4a4a4a" />
          <path d="M4 5v4c3 2 7 2 9 0V5l-4 2z" fill="#696969" />
          <circle cx="16" cy="16" r="5" fill="#e0301e" stroke="#a81608" />
          <rect x="14" y="14" width="4" height="4" fill="#fff" />
        </Icon>
        Авто-торговля
      </button>
      <button className="flex h-7 w-[104px] items-center gap-[1px] pl-[5px] whitespace-nowrap">
        <Icon>
          <rect x="2" y="2" width="18" height="14" fill="#f6d84e" stroke="#b8860b" />
          <path d="M1 3.500h3M1 6.500h3M1 9.500h3M1 12.500h3" stroke="#7a5c06" />
          <path d="M6 6h11M6 9h11M6 12h6" stroke="#a67c00" strokeWidth="1.500" />
          <PlusBadge />
        </Icon>
        Новый ордер
      </button>
      <Separator />
      <ToolButton label="Бары">
        <Icon>
          <Axes />
          <path d="M9 6v11M6 15h3M9 8h3M16 3v11M13 5h3M16 12h3" stroke="#2f9e1b" strokeWidth="2" />
        </Icon>
      </ToolButton>
      <ToolButton label="Свечи" pressed>
        <Icon>
          <Axes />
          <path d="M9 2v15M16 4v12" stroke="#2f9e1b" />
          <rect x="7" y="4" width="4" height="10" fill="#c4f0b4" stroke="#2f9e1b" />
          <rect x="14" y="7" width="4" height="6" fill="#c4f0b4" stroke="#2f9e1b" />
        </Icon>
      </ToolButton>
      <ToolButton label="Линия">
        <Icon>
          <Axes />
          <path d="M4 12l3 2 6-7 6 5" stroke="#2f9e1b" strokeWidth="1.800" />
        </Icon>
      </ToolButton>
      <Separator />
      <ToolButton label="Увеличить">
        <Magnifier plus />
      </ToolButton>
      <ToolButton label="Уменьшить">
        <Magnifier />
      </ToolButton>
      <Separator />
      <ToolButton label="Выстроить окна">
        <Icon>
          <Axes />
          <path d="M7.500 5v13M18.500 2v14" stroke="#2f9e1b" />
          <rect x="6" y="8" width="3" height="7" fill="#c4f0b4" stroke="#2f9e1b" />
          <rect x="17" y="4" width="3" height="9" fill="#c4f0b4" stroke="#2f9e1b" />
          <BlueArrow d="M10 5l4-3v2h2v2h-2v2z" />
          <BlueArrow d="M16 12l-4-3v2h-2v2h2v2z" />
        </Icon>
      </ToolButton>
      <ToolButton label="Автопрокрутка">
        <Icon>
          <Axes />
          <path d="M6 7.500h7V5l5 4-5 4v-2.500H6z" fill="#7bd95a" stroke="#2f9e1b" />
          <path d="M19.500 2v14" stroke="#333" />
        </Icon>
      </ToolButton>
      <ToolButton label="Сдвиг графика" pressed>
        <Icon>
          <Axes />
          <path d="M11.500 2v15" stroke="#333" strokeWidth="1.500" />
          <BlueArrow d="M14 9l4-4v2.500h3v3h-3V13z" />
        </Icon>
      </ToolButton>
      <Separator />
      <Grip />
      <ToolButton label="Курсор" pressed>
        <Icon>
          <path d="M8 4v12l3-3 2 5 2.500-1-2-4.500H17z" fill="#d8d8d8" stroke="#555" strokeWidth="1.300" />
        </Icon>
      </ToolButton>
      <ToolButton label="Перекрестие">
        <Icon>
          <path d="M11 1v7M11 14v7M1 11h7M14 11h7M11 10.500v1" stroke="#666" strokeWidth="1.500" />
        </Icon>
      </ToolButton>
      <Separator />
      <ToolButton label="Вертикальная линия">
        <Icon>
          <path d="M11 4v14" stroke="#666" strokeWidth="2" />
        </Icon>
      </ToolButton>
      <ToolButton label="Горизонтальная линия">
        <Icon>
          <path d="M4 11h14" stroke="#666" strokeWidth="2" />
        </Icon>
      </ToolButton>
      <ToolButton label="Трендовая линия">
        <Icon>
          <path d="M5 17L17 5" stroke="#666" strokeWidth="2" />
        </Icon>
      </ToolButton>
      <ToolButton label="Равноудаленный канал">
        <Icon>
          <path d="M1 14L14 1M5 19L20 5" stroke="#666" strokeWidth="1.500" />
          <path d="M4 13v7M2 18h4M8 8v8M6 14h4M12 6v8M10 8h4M16 2v6M14 6h5" stroke="#666" strokeWidth="1.300" />
          <text x="15" y="21" fill="#000" className="font-['DejaVu_Sans',sans-serif] text-[9px] font-bold">E</text>
        </Icon>
      </ToolButton>
      <ToolButton label="Уровни Фибоначчи">
        <Icon>
          <path d="M4 3.500h14M4 6.500h14M4 9.500h14M4 13.500h8" stroke="#666" strokeDasharray="1 1" />
          <text x="13" y="21" fill="#000" className="font-['DejaVu_Sans',sans-serif] text-[9px] font-bold">F</text>
        </Icon>
      </ToolButton>
      <ToolButton label="Текст">
        <Icon>
          <rect x="4.500" y="4.500" width="13" height="13" stroke="#555" strokeDasharray="1 1" />
          <text x="7" y="16" fill="#444" className="font-['Liberation_Serif',serif] text-[13px] font-bold">T</text>
        </Icon>
      </ToolButton>
      <ToolButton label="Стрелки">
        <Icon>
          <path d="M7 3l4 4H9v3H5V7H3z" fill="#ddd" stroke="#666" />
          <path d="M15 18l-4-4h2v-2h4v2h2z" fill="#ddd" stroke="#666" />
          <path d="M5 13l3 2 8-9" stroke="#666" strokeWidth="1.300" />
        </Icon>
      </ToolButton>
      <Caret label="Список стрелок" />
      <Separator />
      <span className="w-[88px]" />
      <Separator />
      <Grip />
      {timeframes.map((name) => (
        <button
          key={name}
          onClick={() => setPeriod(name)}
          aria-pressed={period === name}
          className={`h-7 w-8 text-center text-[#3c3c3c] ${
            period === name ? "rounded-[3px] border border-[#7f9db9] bg-white" : ""
          }`}
        >
          {name}
        </button>
      ))}
      <Separator />
    </div>
  );
}

/* ---------- docked panels on the left ---------- */

function ScrollButton({ label, up }) {
  return (
    <button
      aria-label={label}
      className="flex h-4 w-4 shrink-0 items-center justify-center rounded-[2px] border border-[#8da06a] bg-linear-to-br from-[#b5c39a] to-[#8fa173] outline-1 -outline-offset-2 outline-white"
    >
      <svg width="8" height="6" viewBox="0 0 8 6" fill="none" stroke="#fff" strokeWidth="2">
        <path d={up ? "M0.500 5L4 1.500 7.500 5" : "M0.500 1L4 4.500 7.500 1"} />
      </svg>
    </button>
  );
}

function Scrollbar({ offset, thumb }) {
  return (
    <div className="flex w-4 shrink-0 flex-col bg-linear-to-r from-[#f1f0ea] to-[#fefefb]">
      <ScrollButton label="Вверх" up />
      <div className={`${offset} ${thumb} flex items-center justify-center rounded-[2px] border border-[#8da06a] bg-linear-to-r from-[#a9b893] to-[#94a679] outline-1 -outline-offset-2 outline-[#c9d4b4]`}>
        <span className="h-2 w-[6px] bg-[repeating-linear-gradient(#d9e3b8_0_1px,#8fa173_1px_2px)]" />
      </div>
      <span className="flex-1" />
      <ScrollButton label="Вниз" />
    </div>
  );
}

function PanelHeader({ letter }) {
  return (
    <div className="flex h-4 items-center justify-between pr-[5px] pl-[3px]">
      <span className="h-[13px] w-[10px] bg-[#d3d7b8] text-center leading-[13px] text-white">{letter}</span>
      <button aria-label="Закрыть панель">
        <svg width="6" height="6" viewBox="0 0 7 7" stroke="#000" strokeWidth="1.800">
          <path d="M0.500 0.500l6 6M6.500 0.500l-6 6" />
        </svg>
      </button>
    </div>
  );
}

function QuoteCell({ height, line }) {
  return (
    <div className={`border-t border-b border-l border-[#aca899] bg-white pt-5 pl-[3px] ${height}`}>
      <div className={`h-[60px] w-px ${line}`} />
    </div>
  );
}

function Sidebar() {
  return (
    <aside className="flex w-[31px] shrink-0 flex-col border-r-2 border-[#aca899] bg-[#ece9d8]">
      <PanelHeader letter="O" />
      <div className="mr-[3px] ml-[3px] flex flex-1 overflow-hidden border border-r-0 border-[#aca899] bg-white">
        <div className="flex w-[6px] shrink-0 flex-col gap-[3px] bg-[#ece9d8] pl-px">
          <QuoteCell height="h-[124px]" line="bg-[#0a0ab4]" />
          <QuoteCell height="h-[124px]" line="bg-[#0a0ab4]" />
          <QuoteCell height="h-[124px]" line="bg-[#b40a0a]" />
          <QuoteCell height="flex-1" line="bg-[#aca899]" />
        </div>
        <Scrollbar offset="mt-[2px]" thumb="h-[188px]" />
      </div>
      <div className="mr-[3px] ml-[3px] h-[21px] overflow-hidden border border-[#aca899] border-t-black pl-[10px] leading-[19px] text-[#716f64]">
        Ск
      </div>
      <div className="mt-[3px] border-t border-white" />
      <PanelHeader letter="H" />
      <div className="mr-[3px] ml-[3px] flex h-[168px] overflow-hidden border border-r-0 border-[#aca899] bg-white pl-[6px]">
        <Scrollbar offset="mt-[26px]" thumb="h-[108px]" />
      </div>
      <div className="mr-[3px] mb-[7px] ml-[6px] h-[18px] overflow-hidden border-b border-l border-black bg-white pl-[8px] leading-4">
        Об
      </div>
    </aside>
  );
}

function Desktop() {
  return (
    <main className="relative flex-1 overflow-hidden border-r-2 border-[#ece9d8] bg-[#808080]">
      <div className="absolute top-[131px] bottom-[136px] left-0 w-20 border-t-[28px] border-b-4 border-[#d5d9ba] bg-black">
        <svg width="5" height="440" viewBox="0 0 5 440" className="block" shapeRendering="crispEdges">
          <path d="M0 5.500h5" stroke="#fff" />
          <path d="M0 78h2v20H0z" fill="#0f0" />
          <path d="M0 81h1v6H0z" fill="#fff" />
          <path d="M2 22.500h3M2 53.500h3M2 116.500h3M2 179.500h3M2 211.500h3M2 274.500h3M2 335.500h3M2 367.500h3" stroke={GRID} />
          <path d="M0 100.500h5" stroke="#f50" />
          <path d="M1 150.500h4" stroke="#00f" />
          <path d="M1 202h4" stroke="red" strokeWidth="3" />
          <path d="M3 227.500h2M3 243.500h2M3 302.500h2M3 312.500h2" stroke="#f0f" />
          <path d="M1 380v30" stroke="#0f0" strokeWidth="1" />
        </svg>
      </div>
      <div className="absolute top-[2px] right-[10px] bottom-0 left-[314px] bg-black">
        <div className="flex h-[28px] w-[352px] items-center justify-end bg-[#d5d9ba] font-['Open_Sans',sans-serif] text-[12px] font-bold text-white">
          y
        </div>
        <svg width="8" height="680" viewBox="0 0 8 680" className="ml-[344px] block" fill="none" shapeRendering="crispEdges">
          <path d="M0 5.500h8M0 515.500h8M0 518.500h8" stroke="#fff" />
          <path d="M2 26.500h3M2 58.500h3M2 90.500h3M2 122.500h3M2 155.500h3M2 187.500h3M2 219.500h3M2 252.500h3M2 284.500h3M0 305.500h8M2 350.500h3M2 382.500h3M2 414.500h3" stroke={GRID} />
          <path d="M0 308l3 14 4 12" stroke="#00f" />
          <path d="M0 380l3 17 4 11" stroke="#87cefa" />
          <path d="M1 433v60M6 462v42" stroke="#0f0" />
          <path d="M1 444v46" stroke="#fff" strokeWidth="1" />
          <path d="M0 545v20M3 550v30" stroke="gold" />
          <path d="M0 598l4 6 4-4" stroke="#f0f" />
        </svg>
      </div>
      <ChartWindow title="EURUSD,H1" place="top-0 right-[10px] bottom-0 left-[665px]">
        <HourChart />
      </ChartWindow>
      <ChartWindow title="EURUSD,Daily" active place="top-[3px] bottom-[2px] left-1 w-[654px]">
        <DailyChart />
      </ChartWindow>
    </main>
  );
}

function ChartTabs() {
  const [current, setCurrent] = useState("EURUSD,Daily");
  return (
    <nav className="flex h-[21px] items-start border-t-2 border-b border-t-white border-b-[#d0cdbd] bg-[#ece9d8] pl-[3px] shadow-[inset_0_1px_0_#000]">
      {chartTabs.map(({ name, width }) => (
        <button
          key={name}
          onClick={() => setCurrent(name)}
          className={`h-[18px] ${width} ${
            current === name
              ? "border border-t-0 border-black bg-white leading-[17px] text-black"
              : "bg-[linear-gradient(#8a887a,#8a887a)] bg-[length:1px_11px] bg-[position:right_4px] bg-no-repeat leading-[18px] text-[#7d7b6f]"
          }`}
        >
          {name}
        </button>
      ))}
      <div className="ml-auto flex h-[18px] items-center gap-4 pr-[10px]">
        <button aria-label="Предыдущие вкладки">
          <svg width="4" height="7" viewBox="0 0 4 7"><path d="M4 0v7L0 3.500z" fill="#9a988a" /></svg>
        </button>
        <button aria-label="Следующие вкладки">
          <svg width="4" height="7" viewBox="0 0 4 7"><path d="M0 0v7l4-3.500z" fill="#9a988a" /></svg>
        </button>
      </div>
    </nav>
  );
}

function BalanceBar() {
  return (
    <div className="flex h-[29px] items-center border-t border-white bg-[#ece9d8] pr-[2px]">
      <div className="flex w-[15px] flex-col items-center gap-1">
        <button aria-label="Закрыть панель инструментов">
          <svg width="6" height="6" viewBox="0 0 6 6" stroke="#000" strokeWidth="1.600" className="block">
            <path d="M0.500 0.500l5 5M5.500 0.500l-5 5" />
          </svg>
        </button>
        <span className="h-2 w-1 bg-[repeating-linear-gradient(#aca899_0_1px,#fff_1px_2px)]" />
      </div>
      <div className="flex h-[23px] flex-1 items-center gap-[6px] border border-[#aca899] bg-white pl-[7px]">
        <span className="h-2 w-2 rounded-full border-2 border-[#999] bg-[#ddd]" />
        <p className="flex gap-[5px] whitespace-nowrap">
          <span>Баланс: 5 073.49</span>
          <span>Прибыль: 0.00</span>
          <span>Средства: 5 073.49</span>
          <span>Свободная маржа: 5 073.49</span>
        </p>
      </div>
    </div>
  );
}

function StatusBar() {
  const cell = "h-[19px] border-l border-[#aca899] shadow-[inset_1px_0_0_#fff]";
  return (
    <footer className="flex h-[23px] items-center border-t border-[#aca899] bg-[#ece9d8] pt-[2px] shadow-[inset_0_1px_0_#fff]">
      <span className="flex-1 pl-[2px] leading-[19px]">Для вызова справки нажмите F1</span>
      <span className={`${cell} w-[121px] pl-1 leading-[19px]`}>Default</span>
      <span className={`${cell} w-[101px]`} />
      <span className={`${cell} w-[72px]`} />
      <span className={`${cell} w-[71px]`} />
      <span className={`${cell} w-[69px]`} />
      <span className={`${cell} w-[71px]`} />
      <span className={`${cell} w-[66px]`} />
      <span className={`${cell} flex w-[112px] items-center gap-[6px] pl-[3px]`}>
        <svg width="17" height="17" viewBox="0 0 17 17" aria-hidden="true">
          <path d="M1 2l3-1.500h8V14l-4 2H1z" fill="#3fa9f5" stroke="#0b6fc2" />
          <path d="M1 2h7v14" fill="none" stroke="#0b6fc2" />
          <path d="M2.500 5h4M2.500 7.500h4M2.500 10h4" stroke="#dff1ff" />
          <circle cx="12" cy="12" r="4.500" fill="#7ac143" stroke="#3e7d12" />
          <path d="M9.800 12l1.700 1.700 3-3.200" fill="none" stroke="#fff" strokeWidth="1.500" />
        </svg>
        132 / 7 Kb
      </span>
    </footer>
  );
}

function App() {
  return (
    <div className="flex min-h-screen flex-col bg-[#ece9d8] font-['DejaVu_Sans_Condensed','DejaVu_Sans',sans-serif] text-[11px] text-black">
      <header className="flex h-[26px] items-center justify-between border-b border-[#8b9a68] bg-linear-to-b from-[#e4edc4] via-[#9faf7c] via-25% to-[#bdc996] pr-[2px] pl-[2px]">
        <div className="flex items-center gap-1">
          <svg width="16" height="16" viewBox="0 0 16 16" aria-hidden="true">
            <rect x="0.500" y="0.500" width="15" height="15" rx="2" fill="#245a8c" stroke="#123a60" />
            <path d="M4 14V3h8v6H7M4 3v4M7 6h3M7 12.500h5" fill="none" stroke="#fff" strokeWidth="1.600" />
          </svg>
          <h1 className="font-['Open_Sans',sans-serif] text-[13px] leading-4 font-bold text-white [text-shadow:1px_1px_1px_#3c4a1e]">
            485640 - RoboForex-MetaTrader 5 - EURUSD,Daily
          </h1>
        </div>
        <CaptionButtons restore />
      </header>
      <nav className="flex h-5 items-center gap-[19px] pl-[9px]">
        {menuItems.map((item) => (
          <button key={item}>{item}</button>
        ))}
      </nav>
      <Toolbar />
      <div className="flex flex-1">
        <Sidebar />
        <div className="flex min-w-0 flex-1 flex-col">
          <Desktop />
          <ChartTabs />
        </div>
      </div>
      <BalanceBar />
      <StatusBar />
    </div>
  );
}

export default App;
